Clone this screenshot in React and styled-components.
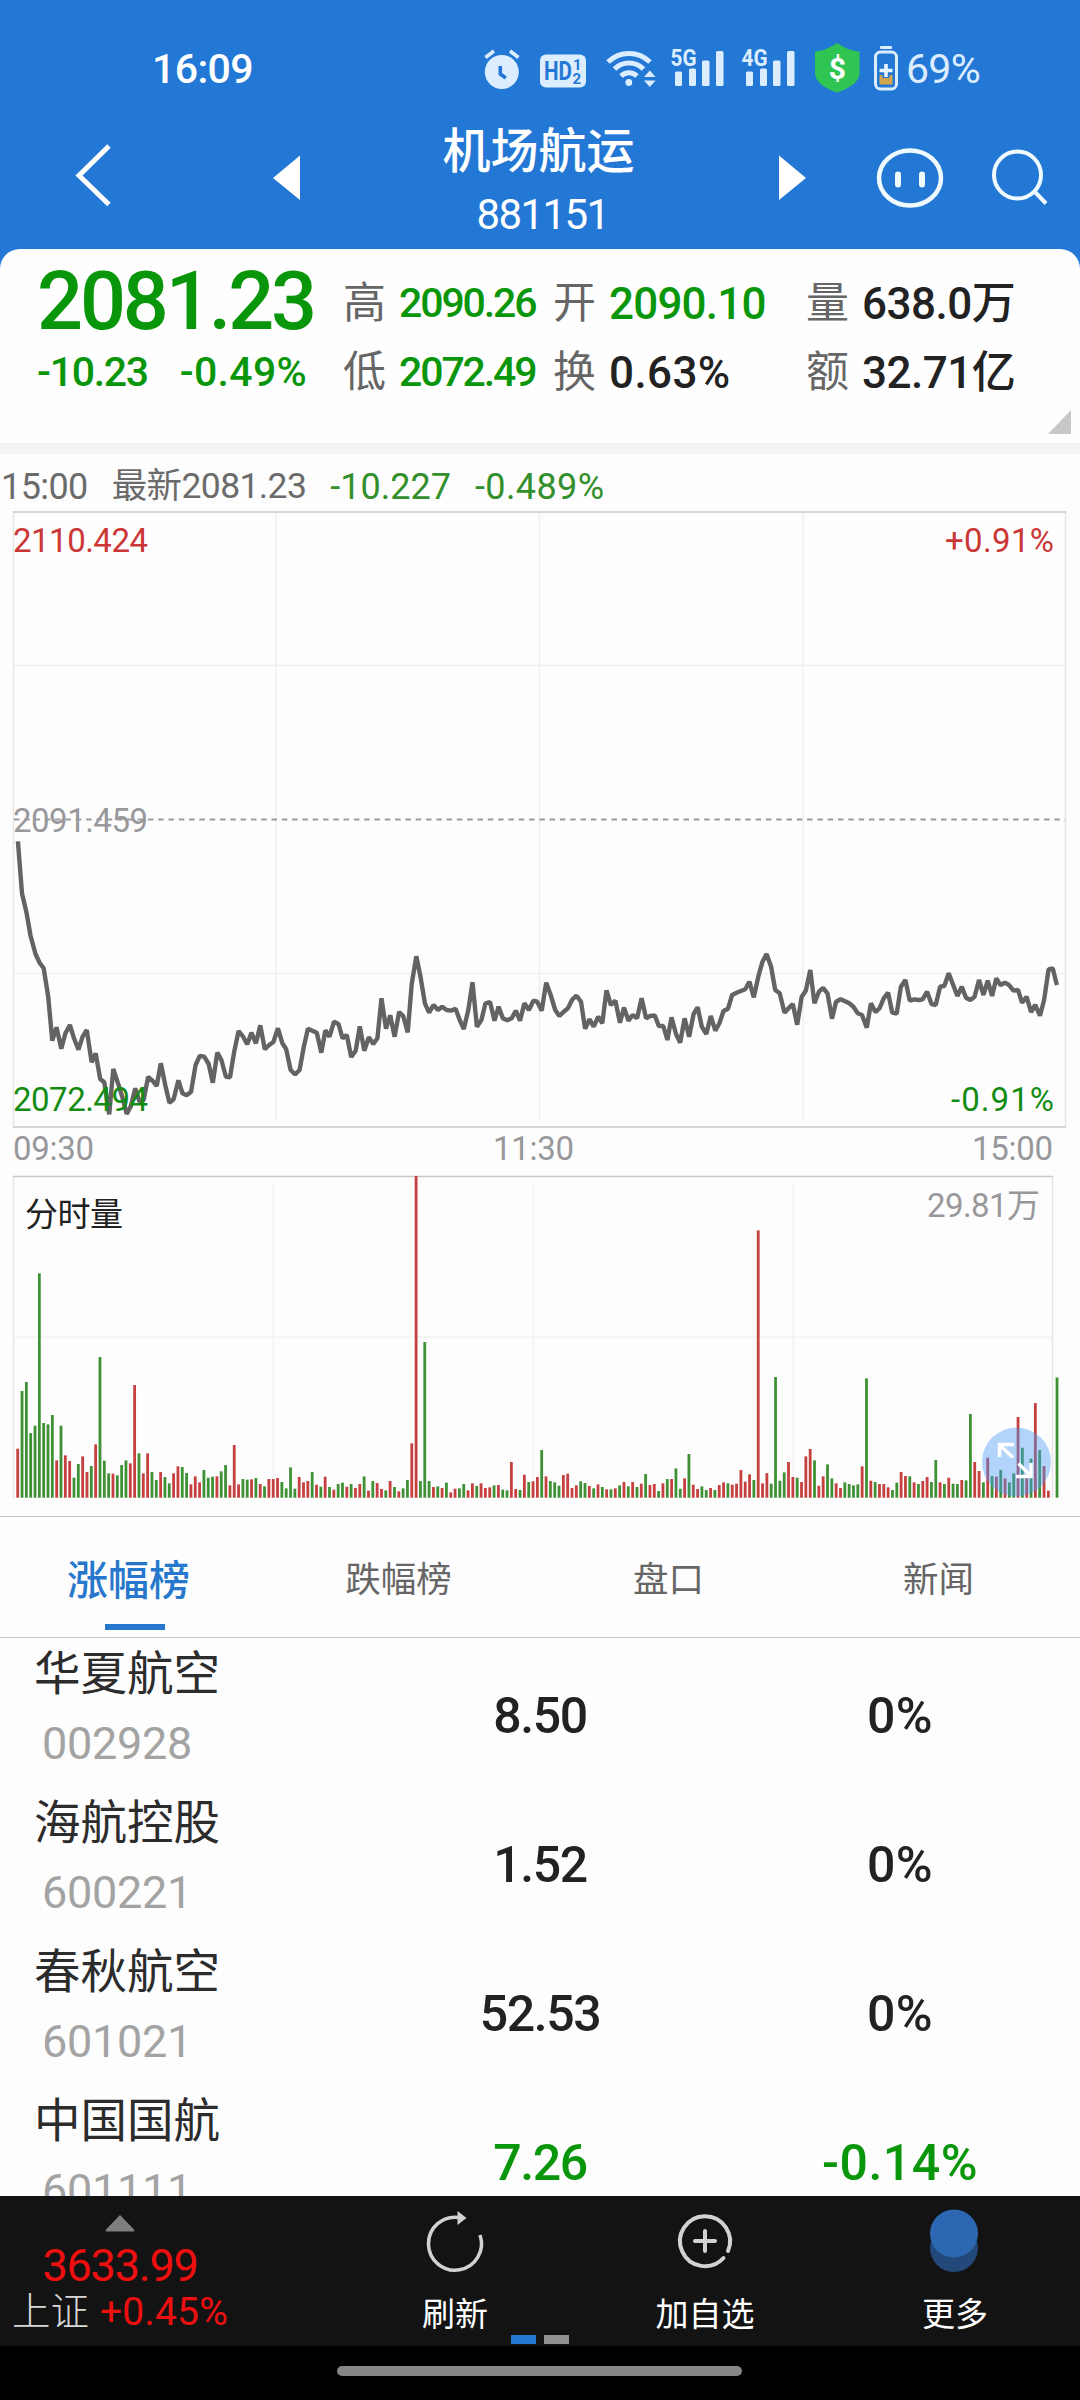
import React from "react";
import styled, { createGlobalStyle } from "styled-components";

const FONT = `Roboto, "Noto Sans CJK SC", sans-serif`;
const BLUE = "#2478d5";
const GREEN = "#0a960a";

const GlobalStyle = createGlobalStyle`
  * { box-sizing: border-box; }
  body { margin: 0; background: #000; font-family: ${FONT}; }
  svg { display: block; flex: none; }
`;

const Screen = styled.div`
  width: 1080px;
  height: 2400px;
  display: flex;
  flex-direction: column;
  background: #fdfdfd;
  overflow: hidden;
  white-space: nowrap;
`;

const Label = styled.span`
  font-size: ${(p) => p.$size}px;
  font-weight: ${(p) => p.$weight || 400};
  color: ${(p) => p.$color || "#222"};
  letter-spacing: ${(p) => p.$spacing || 0}px;
  line-height: 1;
`;

/* ---------- header ---------- */

const Header = styled.header`
  background: ${BLUE};
  height: 249px;
`;

const StatusBar = styled.div`
  display: flex;
  align-items: center;
  height: 115px;
  padding: 24px 100px 0 152px;
`;

const StatusIcons = styled.div`
  display: flex;
  align-items: center;
  margin-left: auto;
  height: 91px;
`;

const NavBar = styled.div`
  display: grid;
  grid-template-columns: 240px 90px 420px 90px 120px 120px;
  height: 134px;
`;

const TitleColumn = styled.div`
  display: flex;
  flex-direction: column;
  align-items: center;
  padding-top: 12px;
  gap: 13px;
`;

const TitleLine = styled.div`
  display: flex;
  align-items: center;
  height: 50px;
  padding-left: ${(p) => p.$left || 0}px;
  padding-right: ${(p) => p.$right || 0}px;
`;

function SignalIcon({ label }) {
  return (
    <svg width="57" height="91" viewBox="669 24 57 91" fill="#dcedff">
      <text x="670.5" y="66" fontSize="24" fontWeight="700" textLength="26" lengthAdjust="spacingAndGlyphs">{label}</text>
      <rect x="675" y="71.5" width="7" height="14.5" rx="1.5" />
      <rect x="689" y="68.5" width="7" height="17.5" rx="1.5" />
      <rect x="702" y="60.5" width="7.5" height="25.5" rx="1.5" />
      <rect x="716" y="51" width="7.5" height="35" rx="1.5" />
    </svg>
  );
}

function TopBar() {
  return (
    <Header>
      <StatusBar>
        <Label $size={41} $color="#fff" $weight={500} $spacing={-0.6}>16:09</Label>
        <StatusIcons>
          <svg width="56" height="91" viewBox="482 24 56 91">
            <circle cx="501.8" cy="72" r="17" fill="#dcedff" />
            <path d="M485.5 57.5l8.5-6.5M518.5 57.5l-8.5-6.5" stroke="#dcedff" strokeWidth="3.6" fill="none" />
            <path d="M500.3 66v8l5.5 4" stroke={BLUE} strokeWidth="3.6" fill="none" />
          </svg>
          <svg width="67" height="91" viewBox="538 24 67 91">
            <rect x="540" y="54.5" width="46" height="33" rx="6" fill="#dcedff" />
            <g fill={BLUE} fontWeight="700">
              <text x="544" y="80" fontSize="25.5" textLength="28" lengthAdjust="spacingAndGlyphs">HD</text>
              <text x="573" y="70" fontSize="15">1</text>
              <text x="572.5" y="83.5" fontSize="15">2</text>
            </g>
          </svg>
          <svg width="64" height="91" viewBox="605 24 64 91" fill="none" stroke="#dcedff" strokeWidth="5">
            <path d="M608 62a30 30 0 0 1 42 0M614.5 69a20.5 20.5 0 0 1 29 0M621 76a11.5 11.5 0 0 1 16 0" />
            <circle cx="628.8" cy="82.5" r="3.4" fill="#dcedff" stroke="none" />
            <path d="M644 77l5.8-6.5 5.8 6.5zM644 80.5l5.8 6.5 5.8-6.5z" fill="#dcedff" stroke="none" />
          </svg>
          <SignalIcon label="5G" />
          <svg width="14" height="91" />
          <SignalIcon label="4G" />
          <svg width="75" height="91" viewBox="797 24 75 91">
            <path d="M837.2 43C844 48 852 51 859.5 51.5v22C859.5 82 848 89 837.2 92.500 826 89 815 82 815 73.500v-22C822.500 51 830 48 837.200 43z" fill="#30c552" />
            <text x="837.3" y="78.5" fontSize="30" fontWeight="700" fill="#fff" textAnchor="middle">$</text>
          </svg>
          <svg width="34" height="91" viewBox="872 24 34 91">
            <rect x="880" y="46" width="12" height="3" rx="1" fill="#dcedff" />
            <rect x="875.5" y="52" width="21" height="37" rx="5" fill="none" stroke="#dcedff" strokeWidth="3" />
            <path d="M879.5 75h13v9.5h-13z" fill="#d2a44b" />
            <path d="M886 63v15M879.500 70.500h13" stroke={BLUE} strokeWidth="7" />
            <path d="M886 64v13M879.500 70.500h13" stroke="#e8f4ff" strokeWidth="3.6" />
          </svg>
          <Label $size={41} $color="#dcedff" $spacing={-0.7}>69%</Label>
        </StatusIcons>
      </StatusBar>
      <NavBar>
        <svg width="240" height="134" viewBox="0 115 240 134">
          <path d="M109 146L79 175.500L109 204.500" fill="none" stroke="#fff" strokeWidth="5" />
        </svg>
        <svg width="90" height="134" viewBox="240 115 90 134">
          <path d="M300 155.500v44.500L273 178z" fill="#fff" />
        </svg>
        <TitleColumn>
          <TitleLine $right={3}><Label $size={48} $color="#fff" $weight={500}>机场航运</Label></TitleLine>
          <TitleLine $left={5}><Label $size={42} $color="#fff" $spacing={-1.6}>881151</Label></TitleLine>
        </TitleColumn>
        <svg width="90" height="134" viewBox="750 115 90 134">
          <path d="M779 155.500v44.500L806 178z" fill="#fff" />
        </svg>
        <svg width="120" height="134" viewBox="840 115 120 134" fill="none" stroke="#effaff" strokeWidth="4.5">
          <ellipse cx="910" cy="178" rx="31" ry="27.5" />
          <path d="M898 174.500v10M922 174.500v10" strokeWidth="6" strokeLinecap="round" />
        </svg>
        <svg width="120" height="134" viewBox="960 115 120 134" fill="none" stroke="#effaff" strokeWidth="4">
          <circle cx="1017.5" cy="175" r="23.5" />
          <path d="M1034 191l12 12.500" />
        </svg>
      </NavBar>
    </Header>
  );
}

/* ---------- quote summary ---------- */

const CardBack = styled.div`
  background: ${BLUE};
`;

const QuoteCard = styled.section`
  position: relative;
  height: 194px;
  padding-top: 20px;
  background: #fefefe;
  border-radius: 20px 20px 0 0;
`;

const QuoteRow = styled.div`
  display: grid;
  grid-template-columns: 343px 210px 253px 1fr;
  grid-template-rows: 69px;
`;

const QuoteCell = styled.div`
  display: flex;
  align-items: center;
  height: 69px;
  gap: ${(p) => p.$gap || 13}px;
  padding-left: ${(p) => p.$left || 0}px;
  padding-bottom: ${(p) => p.$lift || 0}px;
`;

const CornerMark = styled.svg`
  position: absolute;
  right: 9px;
  bottom: 9px;
`;

function Stat({ name, value, color, size = 44, spacing = -0.8 }) {
  return (
    <QuoteCell>
      <Label $size={43} $color="#666">{name}</Label>
      <Label $size={size} $color={color} $weight={500} $spacing={spacing}>{value}</Label>
    </QuoteCell>
  );
}

function Quote() {
  return (
    <CardBack>
      <QuoteCard>
        <QuoteRow>
          <QuoteCell $left={37} $lift={5}>
            <Label $size={81} $color={GREEN} $weight={500} $spacing={-3.1}>2081.23</Label>
          </QuoteCell>
          <Stat name="高" value="2090.26" color={GREEN} size={41} spacing={-2.1} />
          <Stat name="开" value="2090.10" color={GREEN} />
          <Stat name="量" value="638.0万" color="#222" spacing={-0.5} />
        </QuoteRow>
        <QuoteRow>
          <QuoteCell $left={37} $gap={32} $lift={1}>
            <Label $size={41} $color={GREEN} $weight={500} $spacing={-1.3}>-10.23</Label>
            <Label $size={41} $color={GREEN} $weight={500} $spacing={0.3}>-0.49%</Label>
          </QuoteCell>
          <Stat name="低" value="2072.49" color={GREEN} size={41} spacing={-2.1} />
          <Stat name="换" value="0.63%" color="#222" spacing={0.4} />
          <Stat name="额" value="32.71亿" color="#222" spacing={-0.5} />
        </QuoteRow>
        <CornerMark width="23" height="24" viewBox="0 0 23 24">
          <path d="M23 0v24H0z" fill="#c8c8c8" />
        </CornerMark>
      </QuoteCard>
    </CardBack>
  );
}

const Band = styled.div`
  height: 11px;
  background: #f4f4f4;
`;

const InfoLine = styled.div`
  display: flex;
  align-items: center;
  height: 57px;
  padding: 8px 0 0 1px;
  gap: 24px;
`;

/* ---------- charts ---------- */

// Price samples, stored at 2.904 units per pixel across and 3 per pixel down.
const MORNING = "52,34 64,190 77,248 89,318 103,372 115,398 127,415 140,500 152,632 164,592 178,656 190,610 203,585 215,625 228,659 240,620 252,600 266,697 278,670 291,747 303,757 317,853 329,717 342,758 355,800 368,852 380,828 393,775 405,815 417,810 430,741 443,752 455,768 467,700 480,766 492,818 504,808 518,751 530,790 542,796 555,785 568,705 580,678 593,680 606,702 618,758 631,668 643,690 656,740 668,742 680,665 693,603 706,620 718,643 730,608 743,640 756,586 769,658 781,646 794,636 807,595 820,640 831,658 844,720 857,733 870,720 882,652 894,596 907,602 920,608 933,668 945,601 957,620 970,575 983,582 995,625 1007,615 1020,681 1033,662 1045,589 1058,662 1071,622 1084,642 1096,625 1108,505 1121,596 1133,556 1146,620 1159,546 1171,558 1184,607 1196,460 1209,379 1221,440 1234,520 1246,548 1259,525 1272,540 1284,530 1297,540 1310,542 1323,536 1335,570 1347,597 1360,540 1372,457 1385,590 1398,570 1410,520 1423,516 1436,572 1448,530 1460,565 1473,571 1486,565 1498,542 1510,572 1523,520 1536,540 1549,512 1560,515";
const AFTERNOON = "5,542 18,458 31,495 44,540 56,558 69,545 81,535 94,508 106,497 119,515 131,596 144,568 156,590 169,560 181,580 193,481 206,525 219,512 232,578 244,533 257,572 269,555 282,565 295,505 308,565 320,558 333,556 345,588 358,588 370,630 382,562 395,612 407,638 420,565 433,620 446,552 458,532 470,590 483,612 496,558 509,602 521,580 533,543 546,536 558,495 571,488 583,483 596,478 608,455 621,502 634,440 646,395 658,372 671,410 683,480 696,490 710,548 722,535 734,522 747,584 760,500 772,482 785,420 797,520 810,485 822,474 835,490 848,566 860,515 873,508 886,514 898,520 910,530 923,550 935,555 949,593 961,520 974,546 986,535 998,505 1011,488 1023,548 1036,551 1048,470 1061,450 1074,512 1087,508 1100,510 1111,508 1124,485 1137,522 1149,525 1162,470 1174,468 1187,430 1200,465 1212,498 1225,470 1237,503 1250,510 1262,500 1275,450 1288,495 1300,452 1313,498 1325,445 1337,465 1350,458 1362,465 1375,482 1388,480 1400,518 1413,500 1426,546 1438,525 1452,557 1464,510 1477,418 1489,415 1501,465";

const toPixels = (series, left) =>
  series.split(" ").map((pair) => {
    const [x, y] = pair.split(",").map(Number);
    return `${(left + x / 2.904).toFixed(1)},${(830 + y / 3).toFixed(1)}`;
  });

const PRICE_LINE = [...toPixels(MORNING, 0), ...toPixels(AFTERNOON, 540)].join(" ");

// One bar per minute: r = rising, g = falling; the number is the bar's top, with 1013 as the floor.
const VOLUME = `r866 g693 g666 g819 g797 g340 g789 g793 g765 r901 g797 r886 r903 g953 g912 r889 r936 g918 r853 g591
g902 g940 r941 g946 g915 g901 r910 r675 g880 r940 r880 g936 g960 r936 g951 g970 r940 r919 g921 g939
r973 r949 r967 g930 g953 g950 r949 g934 g915 r976 r855 r973 g957 g959 r958 g954 r972 g979 r957 r957
r954 g966 g985 g922 g986 r951 r967 r963 g936 r974 g980 r950 g981 r989 g972 g968 r980 g972 r984 r972
g949 r992 g963 r969 r987 g991 r963 g981 r994 g985 g960 r850 r48 g963 g546 g963 r981 g979 r984 g968
r997 r986 g985 g972 r991 r970 g978 r970 r984 r982 g976 r975 g989 g991 r906 r987 g990 r944 g966 r964
r951 g870 r949 g963 g967 g977 r945 r941 r984 r976 g964 g969 r978 g985 r973 g981 r988 g988 r985 g976
r966 g979 r966 g981 r971 g942 r975 r972 g993 r970 g957 r957 g925 g986 r955 g882 r974 r987 g979 g990
r984 g990 r975 r967 g970 r974 r971 r930 r965 r943 g960 r211 r970 r939 g971 g651 g962 g937 r906 r951
g953 r966 r889 r867 g901 r977 r949 g913 g955 r970 r984 g967 g972 g976 g973 r919 g655 r962 g966 r972
r972 r982 g990 g968 r936 r948 g949 r967 g972 r963 r951 g966 g900 r967 g972 r953 g971 g972 r960 g961
g762 r906 r933 g967 r893 g948 r950 g930 r955 g967 g940 r771 g863 r950 g896 r729 g870 r918 r992 g1013 g652`
  .split(/\s+/)
  .map((item) => ({ up: item[0] === "r", height: (1013 - Number(item.slice(1))) / 3 }));

const AxisText = styled.text`
  font-family: ${FONT};
  font-size: 33px;
  fill: ${(p) => p.$color || "#98989b"};
`;

function PriceChart() {
  return (
    <svg width="1080" height="657" viewBox="0 511 1080 657">
      <g stroke="#f0f0f2" strokeWidth="1.5">
        <path d="M276 512V1120M539.500 512V1120M803 512V1120M14 665.500H1065M14 973.500H1065" />
        <path d="M13.500 511V1127M1065.500 511V1127" stroke="#e6e6e8" />
      </g>
      <path d="M13 512H1066M13 1127H1066" stroke="#c9c9c9" strokeWidth="1.5" />
      <path d="M14 819.500H1065" stroke="#9c9ca0" strokeWidth="2" strokeDasharray="5.5 4.8" />
      <AxisText x="13" y="552" $color="#cb3636" textLength="135">2110.424</AxisText>
      <AxisText x="945" y="552" $color="#cb3636" textLength="109">+0.91%</AxisText>
      <AxisText x="13" y="832" textLength="135">2091.459</AxisText>
      <polyline points={PRICE_LINE} fill="none" stroke="#636363" strokeWidth="4.4" strokeLinejoin="bevel" />
      <AxisText x="13" y="1111" $color="#148c14" textLength="135">2072.494</AxisText>
      <AxisText x="951" y="1111" $color="#148c14" textLength="103">-0.91%</AxisText>
      <AxisText x="13" y="1160" textLength="81">09:30</AxisText>
      <AxisText x="493" y="1160" textLength="81">11:30</AxisText>
      <AxisText x="972" y="1160" textLength="81">15:00</AxisText>
    </svg>
  );
}

function VolumeChart() {
  return (
    <svg width="1080" height="348" viewBox="0 1168 1080 348">
      <path d="M273.500 1184V1497M533.500 1184V1497M793 1184V1497M14 1337H1052" stroke="#f2f2f5" strokeWidth="1.5" />
      <path d="M13.500 1176V1498M1052.500 1176V1498" stroke="#e6e6e8" strokeWidth="1.5" />
      <path d="M13 1176.500H1053" stroke="#c9c9c9" strokeWidth="1.5" />
      {VOLUME.map((bar, i) => (
        <rect
          key={i}
          x={16.3 + i * 4.3305}
          y={1497.7 - bar.height}
          width="2.8"
          height={bar.height}
          fill={bar.up ? "#c5403f" : "#3f9136"}
        />
      ))}
      <AxisText x="25" y="1225.5" $color="#222" textLength="98">分时量</AxisText>
      <AxisText x="927" y="1217" textLength="113">29.81万</AxisText>
      <circle cx="1016.5" cy="1462" r="34.5" fill="#4a9cf8" fillOpacity="0.42" />
      <path d="M1013 1457.500L999.500 1445M999.500 1457V1444.500H1014M1018.500 1463.500L1031 1476M1031 1463V1476.500H1016" fill="none" stroke="#fff" strokeWidth="3.5" />
    </svg>
  );
}

/* ---------- tabs and list ---------- */

const Tabs = styled.nav`
  display: grid;
  grid-template-columns: repeat(4, 270px);
  height: 122px;
  border-top: 1.5px solid #c6c6c6;
  border-bottom: 1.5px solid #c6c6c6;
`;

const Tab = styled.div`
  display: flex;
  flex-direction: column;
  align-items: center;
  justify-content: space-between;
  padding: 38px 0 7px;
`;

const TabText = styled.div`
  display: flex;
  align-items: center;
  height: 52px;
  padding-right: ${(p) => p.$inset}px;
`;

const Underline = styled.div`
  width: 60px;
  height: 6px;
  background: ${(p) => (p.$active ? "#2777cc" : "transparent")};
`;

const List = styled.main`
  height: 558px;
  overflow: hidden;
`;

const StockRow = styled.div`
  display: grid;
  grid-template-columns: repeat(3, 360px);
  height: 149px;
`;

const NameCell = styled.div`
  display: flex;
  flex-direction: column;
  padding: 9px 0 0 34px;
  gap: 12px;
`;

const NameLine = styled.div`
  display: flex;
  align-items: center;
  height: ${(p) => p.$height}px;
  padding-left: ${(p) => p.$indent || 0}px;
`;

const ValueCell = styled.div`
  display: flex;
  align-items: center;
  justify-content: center;
  padding-top: 7px;
`;

const TABS = ["涨幅榜", "跌幅榜", "盘口", "新闻"];

const STOCKS = [
  { name: "华夏航空", code: "002928", price: "8.50", change: "0%" },
  { name: "海航控股", code: "600221", price: "1.52", change: "0%" },
  { name: "春秋航空", code: "601021", price: "52.53", change: "0%" },
  { name: "中国国航", code: "601111", price: "7.26", change: "-0.14%", down: true },
];

function Stock({ item }) {
  const color = item.down ? GREEN : "#222";
  return (
    <StockRow>
      <NameCell>
        <NameLine $height={54}>
          <Label $size={46.5} $color="#2c2c2c">{item.name}</Label>
        </NameLine>
        <NameLine $height={60} $indent={8}>
          <Label $size={45} $color="#a3a3a3" $spacing={-0.3}>{item.code}</Label>
        </NameLine>
      </NameCell>
      <ValueCell>
        <Label $size={50} $color={color} $weight={500} $spacing={-1.4}>{item.price}</Label>
      </ValueCell>
      <ValueCell>
        <Label $size={50} $color={color} $weight={500} $spacing={0.5}>{item.change}</Label>
      </ValueCell>
    </StockRow>
  );
}

/* ---------- bottom bar ---------- */

const BottomBar = styled.footer`
  position: relative;
  display: grid;
  grid-template-columns: 330px repeat(3, 250px);
  height: 150px;
  background: #131313;
`;

const IndexCell = styled.div`
  display: flex;
  flex-direction: column;
  align-items: center;
  width: 240px;
`;

const IndexLine = styled.div`
  display: flex;
  align-items: center;
  height: 47px;
  gap: 11px;
`;

const Action = styled.div`
  display: flex;
  flex-direction: column;
  align-items: center;
`;

const ActionText = styled.div`
  display: flex;
  align-items: center;
  height: 56px;
`;

const PageDots = styled.div`
  position: absolute;
  left: 511px;
  bottom: 2px;
  display: flex;
  gap: 8px;
`;

const PageDot = styled.i`
  width: 25px;
  height: 9px;
  background: ${(p) => (p.$active ? "#2478d0" : "#909090")};
`;

const HomeArea = styled.div`
  display: flex;
  justify-content: center;
  padding: 20px 2px 0 0;
  height: 54px;
  background: #000;
`;

const HomePill = styled.div`
  width: 405px;
  height: 10px;
  border-radius: 5px;
  background: #868686;
`;

export default function App() {
  return (
    <>
      <GlobalStyle />
      <Screen>
        <TopBar />
        <Quote />
        <Band />
        <InfoLine>
          <Label $size={36} $color="#6b6b6b" $spacing={-0.6}>15:00</Label>
          <Label $size={35.5} $color="#6b6b6b" $spacing={-0.6}>最新2081.23</Label>
          <Label $size={36} $color="#338f2b">-10.227</Label>
          <Label $size={36} $color="#338f2b" $spacing={0.4}>-0.489%</Label>
        </InfoLine>
        <PriceChart />
        <VolumeChart />
        <Tabs>
          {TABS.map((tab, i) => (
            <Tab key={tab}>
              <TabText $inset={13}>
                <Label $size={i === 0 ? 41 : 35.5} $weight={i === 0 ? 500 : 400} $color={i === 0 ? "#2777cc" : "#666"}>{tab}</Label>
              </TabText>
              <Underline $active={i === 0} />
            </Tab>
          ))}
        </Tabs>
        <List>
          {STOCKS.map((item) => <Stock key={item.code} item={item} />)}
        </List>
        <BottomBar>
          <IndexCell>
            <svg width="240" height="46" viewBox="0 0 240 46">
              <path d="M120 19l14 14.500q1 2-1 2H107q-2 0-1-2z" fill="#7f7f7f" />
            </svg>
            <IndexLine>
              <Label $size={45} $color="#ee1010" $spacing={-1.2}>3633.99</Label>
            </IndexLine>
            <IndexLine>
              <Label $size={38.5} $color="#d8d8d8" $weight={300}>上证</Label>
              <Label $size={39} $color="#ee1010" $spacing={0.2}>+0.45%</Label>
            </IndexLine>
          </IndexCell>
          <Action>
            <svg width="250" height="90" viewBox="330 2196 250 90">
              <path d="M459 2217.500A26.500 26.500 0 1 0 480 2235" fill="none" stroke="#d2d2d2" strokeWidth="3.5" />
              <path d="M457.500 2211l9 7-9 7z" fill="#d2d2d2" />
            </svg>
            <ActionText><Label $size={33} $color="#fff">刷新</Label></ActionText>
          </Action>
          <Action>
            <svg width="250" height="90" viewBox="580 2196 250 90" fill="none" stroke="#d2d2d2" strokeWidth="4" strokeLinecap="round">
              <path d="M728 2251A25 25 0 1 0 723.500 2258" />
              <path d="M705 2231v20M695 2241h20" />
            </svg>
            <ActionText><Label $size={33} $color="#fff">加自选</Label></ActionText>
          </Action>
          <Action>
            <svg width="250" height="90" viewBox="830 2196 250 90">
              <circle cx="954" cy="2248" r="24" fill="#22497a" />
              <circle cx="954" cy="2233.5" r="24" fill="#2c68b2" />
            </svg>
            <ActionText><Label $size={33} $color="#fff">更多</Label></ActionText>
          </Action>
          <PageDots>
            <PageDot $active />
            <PageDot />
          </PageDots>
        </BottomBar>
        <HomeArea><HomePill /></HomeArea>
      </Screen>
    </>
  );
}
